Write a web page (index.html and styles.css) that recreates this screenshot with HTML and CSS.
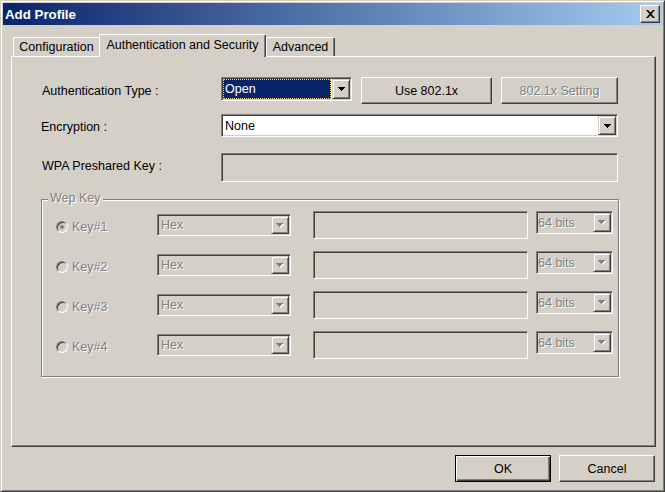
FILE: index.html
```html
<!DOCTYPE html>
<html lang="en">
<head>
  <meta charset="UTF-8">
  <title>Add Profile</title>
  <link rel="stylesheet" href="styles.css">
</head>
<body>

<div class="window">
  <div class="titlebar">
    <span>Add Profile</span>
    <button class="close" type="button" aria-label="Close">
      <svg width="9" height="8" viewBox="0 0 9 8"><path d="M0 0h2l2.5 2.5L7 0h2L5.5 4 9 8H7L4.5 5.5 2 8H0l3.5-4z" fill="#000"/></svg>
    </button>
  </div>

  <div class="tabs">
    <div class="tab tab-config">Configuration</div>
    <div class="tab tab-active">Authentication and Security</div>
    <div class="tab tab-advanced">Advanced</div>
  </div>

  <div class="panel">
    <!-- Authentication -->
    <div class="row row-auth">
      <span class="label">Authentication Type :</span>
      <div class="combo combo-open">
        <span class="combo-value selected">Open</span>
        <span class="combo-btn"><svg width="7" height="4" viewBox="0 0 7 4"><path d="M0 0h7v1H6v1H5v1H4v1H3V3H2V2H1V1H0z"/></svg></span>
      </div>
      <button class="btn btn-use" type="button">Use 802.1x</button>
      <button class="btn btn-setting off" type="button" disabled>802.1x Setting</button>
    </div>

    <!-- Encryption -->
    <div class="row row-enc">
      <span class="label label-enc">Encryption :</span>
      <div class="combo combo-enc">
        <span class="combo-value">None</span>
        <span class="combo-btn"><svg width="7" height="4" viewBox="0 0 7 4"><path d="M0 0h7v1H6v1H5v1H4v1H3V3H2V2H1V1H0z"/></svg></span>
      </div>
    </div>

    <div class="row row-wpa">
      <span class="label label-wpa">WPA Preshared Key :</span>
      <input class="field field-wpa" type="text" disabled>
    </div>

    <!-- Wep Key -->
    <div class="group">
      <div class="group-title off">Wep Key</div>
      <div class="keys">
        <div class="key-row">
          <span class="key-opt"><span class="radio on"></span><span class="off">Key#1</span></span>
          <div class="combo combo-off combo-hex"><span class="combo-value off">Hex</span><span class="combo-btn"><svg width="8" height="5" viewBox="0 0 8 5"><path d="M1 1h7v1H7v1H6v1H5v1H4V4H3V3H2V2H1z" fill="#fff"/><path d="M0 0h7v1H6v1H5v1H4v1H3V3H2V2H1V1H0z" fill="#808080"/></svg></span></div>
          <input class="field field-key" type="text" disabled>
          <div class="combo combo-off combo-bits"><span class="combo-value off">64 bits</span><span class="combo-btn"><svg width="8" height="5" viewBox="0 0 8 5"><path d="M1 1h7v1H7v1H6v1H5v1H4V4H3V3H2V2H1z" fill="#fff"/><path d="M0 0h7v1H6v1H5v1H4v1H3V3H2V2H1V1H0z" fill="#808080"/></svg></span></div>
        </div>
        <div class="key-row">
          <span class="key-opt"><span class="radio"></span><span class="off">Key#2</span></span>
          <div class="combo combo-off combo-hex"><span class="combo-value off">Hex</span><span class="combo-btn"><svg width="8" height="5" viewBox="0 0 8 5"><path d="M1 1h7v1H7v1H6v1H5v1H4V4H3V3H2V2H1z" fill="#fff"/><path d="M0 0h7v1H6v1H5v1H4v1H3V3H2V2H1V1H0z" fill="#808080"/></svg></span></div>
          <input class="field field-key" type="text" disabled>
          <div class="combo combo-off combo-bits"><span class="combo-value off">64 bits</span><span class="combo-btn"><svg width="8" height="5" viewBox="0 0 8 5"><path d="M1 1h7v1H7v1H6v1H5v1H4V4H3V3H2V2H1z" fill="#fff"/><path d="M0 0h7v1H6v1H5v1H4v1H3V3H2V2H1V1H0z" fill="#808080"/></svg></span></div>
        </div>
        <div class="key-row">
          <span class="key-opt"><span class="radio"></span><span class="off">Key#3</span></span>
          <div class="combo combo-off combo-hex"><span class="combo-value off">Hex</span><span class="combo-btn"><svg width="8" height="5" viewBox="0 0 8 5"><path d="M1 1h7v1H7v1H6v1H5v1H4V4H3V3H2V2H1z" fill="#fff"/><path d="M0 0h7v1H6v1H5v1H4v1H3V3H2V2H1V1H0z" fill="#808080"/></svg></span></div>
          <input class="field field-key" type="text" disabled>
          <div class="combo combo-off combo-bits"><span class="combo-value off">64 bits</span><span class="combo-btn"><svg width="8" height="5" viewBox="0 0 8 5"><path d="M1 1h7v1H7v1H6v1H5v1H4V4H3V3H2V2H1z" fill="#fff"/><path d="M0 0h7v1H6v1H5v1H4v1H3V3H2V2H1V1H0z" fill="#808080"/></svg></span></div>
        </div>
        <div class="key-row">
          <span class="key-opt"><span class="radio"></span><span class="off">Key#4</span></span>
          <div class="combo combo-off combo-hex"><span class="combo-value off">Hex</span><span class="combo-btn"><svg width="8" height="5" viewBox="0 0 8 5"><path d="M1 1h7v1H7v1H6v1H5v1H4V4H3V3H2V2H1z" fill="#fff"/><path d="M0 0h7v1H6v1H5v1H4v1H3V3H2V2H1V1H0z" fill="#808080"/></svg></span></div>
          <input class="field field-key" type="text" disabled>
          <div class="combo combo-off combo-bits"><span class="combo-value off">64 bits</span><span class="combo-btn"><svg width="8" height="5" viewBox="0 0 8 5"><path d="M1 1h7v1H7v1H6v1H5v1H4V4H3V3H2V2H1z" fill="#fff"/><path d="M0 0h7v1H6v1H5v1H4v1H3V3H2V2H1V1H0z" fill="#808080"/></svg></span></div>
        </div>
      </div>
    </div>
  </div>

  <div class="footer">
    <button class="btn btn-ok" type="button">OK</button>
    <button class="btn btn-cancel" type="button">Cancel</button>
  </div>
</div>

</body>
</html>
```

FILE: styles.css
```css
* { box-sizing: border-box; }
body {
  margin: 0;
  background: #d4d0c8;
  font-family: "Liberation Sans", Arial, sans-serif;
  font-size: 12.5px;
  color: #000;
}
.window {
  width: 665px;
  height: 492px;
  padding: 2px;
  background: #d4d0c8;
  border: 1px solid;
  border-color: #d4d0c8 #404040 #404040 #d4d0c8;
  box-shadow: inset 1px 1px #fff, inset -1px -1px #808080;
}
.titlebar {
  height: 22px;
  display: flex;
  align-items: center;
  justify-content: space-between;
  padding: 0 2px;
  background: linear-gradient(to right, #0a246a, #a6caf0);
  color: #fff;
  font-weight: bold;
  font-size: 13.3px;
}
.close {
  width: 20px;
  height: 18px;
  padding: 0;
  display: flex;
  align-items: center;
  justify-content: center;
  background: #d4d0c8;
  border: 1px solid;
  border-color: #fff #404040 #404040 #fff;
  box-shadow: inset -1px -1px #808080;
}
.tabs {
  display: flex;
  align-items: flex-end;
  height: 22px;
  margin-top: 9px;
  padding-left: 10px;
}
.tab {
  height: 19px;
  line-height: 18px;
  text-align: center;
  white-space: nowrap;
  border-top: 1px solid #fff;
  border-left: 1px solid #fff;
  border-radius: 2px 2px 0 0;
  background: #d4d0c8;
}
.tab-config { width: 86px; }
.tab-active {
  width: 167px;
  height: 23px;
  padding-top: 1px;
  margin-bottom: -1px;
  border-right: 1px solid #404040;
  box-shadow: inset -1px 0 #808080;
  position: relative;
  z-index: 1;
}
.tab-advanced {
  width: 69px;
  border-right: 1px solid #404040;
  box-shadow: inset -1px 0 #808080;
}
.panel {
  width: 645px;
  height: 391px;
  margin-left: 8px;
  padding: 20px 0 0 29px;
  border: 1px solid;
  border-color: #fff #404040 #404040 #fff;
  box-shadow: inset -1px -1px #808080;
}
.row {
  display: flex;
  align-items: center;
}
.row-auth { height: 27px; align-items: flex-start; }
.row-auth .label { align-self: center; }
.row-enc { height: 23px; margin-top: 10px; }
.row-wpa { height: 29px; margin-top: 16px; }
.label {
  width: 180px;
  padding-left: 1px;
  white-space: nowrap;
}
.label-enc { padding-left: 0; padding-top: 2px; }
.label-wpa { padding-bottom: 4px; }

.off {
  color: #808080;
  text-shadow: 1px 1px 0 #fff;
}

/* combo boxes */
.combo {
  display: flex;
  padding: 1px;
  background: #fff;
  border: 1px solid;
  border-color: #808080 #fff #fff #808080;
  box-shadow: inset 1px 1px #404040, inset -1px -1px #d4d0c8;
}
.combo-off { background: #d4d0c8; }
.combo-value {
  flex: 1;
  display: flex;
  align-items: center;
  padding-left: 2px;
  white-space: nowrap;
  overflow: hidden;
}
.combo-value.selected {
  padding-left: 1px;
  margin-right: 1px;
  background: #0a246a;
  color: #fff;
  border: 1px dotted #e8d28a;
}
.combo-btn {
  width: 18px;
  display: flex;
  align-items: center;
  justify-content: center;
  background: #d4d0c8;
  border: 1px solid;
  border-color: #d4d0c8 #404040 #404040 #d4d0c8;
  box-shadow: inset 1px 1px #fff, inset -1px -1px #808080;
}
.combo-open { width: 131px; height: 24px; }
.combo-enc { width: 397px; height: 23px; }
.combo-hex { width: 134px; height: 22px; margin-top: 3px; }
.combo-bits { width: 77px; height: 23px; margin-left: 8px; }
.combo-bits .combo-value { padding-left: 0; }

.field {
  display: block;
  padding: 0;
  font: inherit;
  background: #d4d0c8;
  border: 1px solid;
  border-color: #808080 #fff #fff #808080;
  box-shadow: inset 1px 1px #404040, inset -1px -1px #d4d0c8;
}
.field-wpa { width: 397px; height: 29px; }
.field-key { width: 215px; height: 28px; margin-left: 22px; }

/* buttons */
.btn {
  height: 27px;
  padding: 0;
  font: inherit;
  color: #000;
  background: #d4d0c8;
  border: 1px solid;
  border-color: #fff #404040 #404040 #fff;
  box-shadow: inset -1px -1px #808080;
}
.btn.off { color: #808080; }
.btn-use { width: 131px; margin-left: 9px; }
.btn-setting { width: 117px; margin-left: 9px; }

/* wep key group */
.group {
  width: 578px;
  height: 178px;
  margin-top: 17px;
  border: 1px solid #808080;
  box-shadow: inset 1px 1px #fff, 1px 1px #fff;
}
.group-title {
  width: fit-content;
  margin: -9px 0 0 6px;
  padding: 0 2px;
  line-height: 15px;
  background: #d4d0c8;
}
.keys {
  display: flex;
  flex-direction: column;
  gap: 12px;
  margin-top: 5px;
}
.key-row {
  display: flex;
  align-items: flex-start;
  height: 28px;
}
.key-opt {
  width: 115px;
  height: 12px;
  margin-top: 10px;
  padding-left: 14px;
  display: flex;
  align-items: center;
  gap: 4px;
}
.radio {
  width: 12px;
  height: 12px;
  flex: none;
  border-radius: 50%;
  display: flex;
  align-items: center;
  justify-content: center;
  background: #d4d0c8;
  border: 1px solid;
  border-color: #808080 #fff #fff #808080;
  box-shadow: inset 1px 1px #404040, inset -1px -1px #d4d0c8;
}
.radio.on::after {
  content: "";
  width: 4px;
  height: 4px;
  border-radius: 50%;
  background: #808080;
}

.footer {
  display: flex;
  justify-content: flex-end;
  gap: 8px;
  margin-top: 8px;
  padding-right: 7px;
}
.btn-ok {
  width: 96px;
  border: 1px solid #000;
  box-shadow: inset 1px 1px #fff, inset -1px -1px #404040, inset -2px -2px #808080;
}
.btn-cancel { width: 96px; }
```
